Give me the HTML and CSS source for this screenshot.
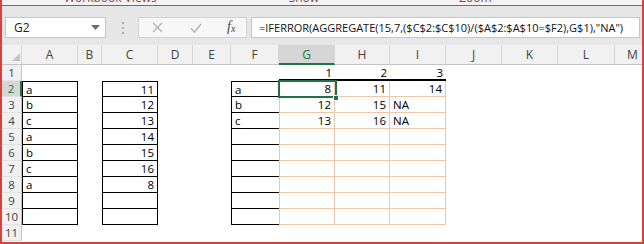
FILE: index.html
```html
<!DOCTYPE html>
<html lang="en">
<head>
    <meta charset="UTF-8">
    <meta name="viewport" content="width=device-width, initial-scale=1.0">
    <title>AGGREGATE lookup</title>
    <link rel="stylesheet" href="styles.css">
</head>
<body>
    <div class="window">
        <div class="ribbon">
            <span class="grp g1">Workbook Views</span>
            <span class="grp g2">Show</span>
            <span class="grp g3">Zoom</span>
        </div>
        <div class="fbar">
            <div class="namebox">
                <span>G2</span>
                <svg class="drop" width="9" height="5" viewBox="0 0 9 5"><polygon points="0,0 9,0 4.5,5" fill="#6d6d6d"/></svg>
            </div>
            <div class="grip"><i></i><i></i><i></i></div>
            <div class="fbtns">
                <svg class="btn-x" width="11" height="11" viewBox="0 0 11 11"><path d="M1 1 L10 10 M10 1 L1 10" stroke="#b4b4b4" stroke-width="1.4" fill="none"/></svg>
                <svg class="btn-ok" width="12" height="10" viewBox="0 0 12 10"><path d="M1 5.5 L4.5 9 L11 1" stroke="#b4b4b4" stroke-width="1.4" fill="none"/></svg>
                <span class="fx">f<sub>x</sub></span>
            </div>
            <div class="formula">=IFERROR(AGGREGATE(15,7,($C$2:$C$10)/($A$2:$A$10=$F2),G$1),"NA")</div>
        </div>

        <div class="sheet">
            <!-- column headers -->
            <div class="ch corner"><svg width="8" height="8" viewBox="0 0 8 8"><polygon points="8,0 8,8 0,8" fill="#c3c3c3"/></svg></div>
            <div class="ch">A</div><div class="ch">B</div><div class="ch">C</div><div class="ch">D</div><div class="ch">E</div><div class="ch">F</div>
            <div class="ch on">G</div><div class="ch">H</div><div class="ch">I</div><div class="ch">J</div><div class="ch">K</div><div class="ch">L</div><div class="ch last">M</div>

            <!-- row 1 -->
            <div class="rh">1</div>
            <div></div><div></div><div></div><div></div><div></div><div></div>
            <div class="c num thick">1</div><div class="c num thick">2</div><div class="c num thick">3</div><div></div><div></div><div></div><div></div>

            <!-- row 2 -->
            <div class="rh on">2</div>
            <div class="c bx top">a</div><div></div><div class="c bx top num">11</div><div></div><div></div><div class="c f top">a</div>
            <div class="c or g num">8</div><div class="c or num">11</div><div class="c or num">14</div><div></div><div></div><div></div><div></div>

            <!-- row 3 -->
            <div class="rh">3</div>
            <div class="c bx">b</div><div></div><div class="c bx num">12</div><div></div><div></div><div class="c f">b</div>
            <div class="c or g num">12</div><div class="c or num">15</div><div class="c or">NA</div><div></div><div></div><div></div><div></div>

            <!-- row 4 -->
            <div class="rh">4</div>
            <div class="c bx">c</div><div></div><div class="c bx num">13</div><div></div><div></div><div class="c f">c</div>
            <div class="c or g num">13</div><div class="c or num">16</div><div class="c or">NA</div><div></div><div></div><div></div><div></div>

            <!-- row 5 -->
            <div class="rh">5</div>
            <div class="c bx">a</div><div></div><div class="c bx num">14</div><div></div><div></div><div class="c f"></div>
            <div class="c or g"></div><div class="c or"></div><div class="c or"></div><div></div><div></div><div></div><div></div>

            <!-- row 6 -->
            <div class="rh">6</div>
            <div class="c bx">b</div><div></div><div class="c bx num">15</div><div></div><div></div><div class="c f"></div>
            <div class="c or g"></div><div class="c or"></div><div class="c or"></div><div></div><div></div><div></div><div></div>

            <!-- row 7 -->
            <div class="rh">7</div>
            <div class="c bx">c</div><div></div><div class="c bx num">16</div><div></div><div></div><div class="c f"></div>
            <div class="c or g"></div><div class="c or"></div><div class="c or"></div><div></div><div></div><div></div><div></div>

            <!-- row 8 -->
            <div class="rh">8</div>
            <div class="c bx">a</div><div></div><div class="c bx num">8</div><div></div><div></div><div class="c f"></div>
            <div class="c or g"></div><div class="c or"></div><div class="c or"></div><div></div><div></div><div></div><div></div>

            <!-- row 9 -->
            <div class="rh">9</div>
            <div class="c bx"></div><div></div><div class="c bx"></div><div></div><div></div><div class="c f"></div>
            <div class="c or g"></div><div class="c or"></div><div class="c or"></div><div></div><div></div><div></div><div></div>

            <!-- row 10 -->
            <div class="rh">10</div>
            <div class="c bx"></div><div></div><div class="c bx"></div><div></div><div></div><div class="c f"></div>
            <div class="c or g"></div><div class="c or"></div><div class="c or"></div><div></div><div></div><div></div><div></div>

            <!-- row 11 -->
            <div class="rh">11</div>

            <!-- active cell G2 -->
            <div class="sel"></div>
            <div class="handle"></div>
        </div>
    </div>
</body>
</html>
```

FILE: styles.css
```css
html, body {
    margin: 0;
    padding: 0;
    background: #fff;
}
.window {
    width: 644px;
    height: 244px;
    box-sizing: border-box;
    border: 2px solid #d9413f;
    border-top: 0;
    overflow: hidden;
    font-family: "Open Sans", "Liberation Sans", sans-serif;
}
.ribbon {
    height: 5px;
    background: #f4f2f2;
    border-bottom: 1px solid #d9413f;
    overflow: hidden;
    display: flex;
    font-size: 12px;
    line-height: 12px;
    color: #7a4a4a;
}
.grp {
    margin-top: -8px;
}
.g1 { margin-left: 62px; }
.g2 { margin-left: 132px; }
.g3 { margin-left: 140px; }

.fbar {
    height: 39px;
    box-sizing: border-box;
    background: #e6e6e6;
    display: flex;
    align-items: flex-start;
    padding-top: 11px;
}
.namebox {
    flex-shrink: 0;
    margin-left: 3px;
    width: 101px;
    height: 21px;
    box-sizing: border-box;
    background: #fff;
    border: 1px solid #c6c6c6;
    display: flex;
    align-items: center;
    justify-content: space-between;
    padding: 0 5px 0 8px;
    font-size: 12px;
    color: #222;
}
.grip {
    flex-shrink: 0;
    margin-left: 16px;
    margin-top: 5px;
    width: 2px;
    display: flex;
    flex-direction: column;
    gap: 3px;
}
.grip i {
    display: block;
    width: 2px;
    height: 2px;
    background: #b0b0b0;
}
.fbtns {
    flex-shrink: 0;
    margin-left: 14px;
    width: 109px;
    height: 21px;
    box-sizing: border-box;
    background: #f7f7f7;
    border: 1px solid #d2d2d2;
    display: flex;
    align-items: center;
    padding-left: 13px;
}
.btn-ok { margin-left: 27px; }
.fx {
    margin-left: 25px;
    font-family: "Liberation Serif", serif;
    font-style: italic;
    font-size: 14px;
    color: #444;
    line-height: 14px;
}
.fx sub {
    font-size: 10px;
    vertical-align: -1px;
}
.formula {
    margin-left: 4px;
    margin-right: 2px;
    flex: 1;
    min-width: 0;
    overflow: hidden;
    height: 21px;
    box-sizing: border-box;
    background: #fff;
    border: 1px solid #c6c6c6;
    padding-left: 7px;
    font-size: 11px;
    line-height: 19px;
    color: #111;
    white-space: nowrap;
}

/* worksheet grid: row header + columns A..M */
.sheet {
    position: relative;
    display: grid;
    grid-template-columns: 20px 56px 24px 56px 35px 38px 48px 56px 55px 56px 56px 56px 57px 27px;
    grid-template-rows: 20px repeat(11, 16px);
    font-size: 11.5px;
    color: #000;
}
.ch {
    background: #f1f1f1;
    border-right: 1px solid #d6d6d6;
    border-bottom: 1px solid #c4c4c4;
    box-sizing: border-box;
    font-size: 12px;
    line-height: 19px;
    color: #444;
    text-align: center;
}
.ch.on {
    background: #d6d6d6;
    color: #217346;
    border-bottom: 2px solid #217346;
}
.ch.last {
    border-right: 0;
    text-align: left;
    padding-left: 12px;
}
.corner {
    display: flex;
    align-items: flex-end;
    justify-content: flex-end;
    padding: 0 1px 3px 0;
}
.rh {
    grid-column: 1;
    background: #f1f1f1;
    border-right: 1px solid #c4c4c4;
    border-bottom: 1px solid #e2e2e2;
    box-sizing: border-box;
    font-size: 11.5px;
    line-height: 15px;
    color: #444;
    text-align: center;
}
.rh.on {
    background: #d6d6d6;
    color: #217346;
    border-right: 2px solid #217346;
}
.c {
    box-sizing: border-box;
    padding: 0 3px;
    line-height: 15px;
    white-space: nowrap;
    overflow: hidden;
}
.num {
    text-align: right;
}
.bx {
    border: 1px solid #000;
    border-top: 0;
}
.f {
    border-left: 1px solid #000;
    border-bottom: 1px solid #000;
}
.top {
    border-top: 1px solid #000;
}
.or {
    border-right: 1px solid #efc6a6;
    border-bottom: 1px solid #efc6a6;
}
.or.g {
    border-left: 1px solid #efc6a6;
}
.thick {
    border-bottom: 2px solid #000;
}

.sel {
    position: absolute;
    left: 276px;
    top: 35px;
    width: 59px;
    height: 18px;
    box-sizing: border-box;
    border: 2px solid #217346;
}
.handle {
    position: absolute;
    left: 331px;
    top: 50px;
    width: 6px;
    height: 6px;
    box-sizing: border-box;
    background: #217346;
    border: 1px solid #fff;
}
```
